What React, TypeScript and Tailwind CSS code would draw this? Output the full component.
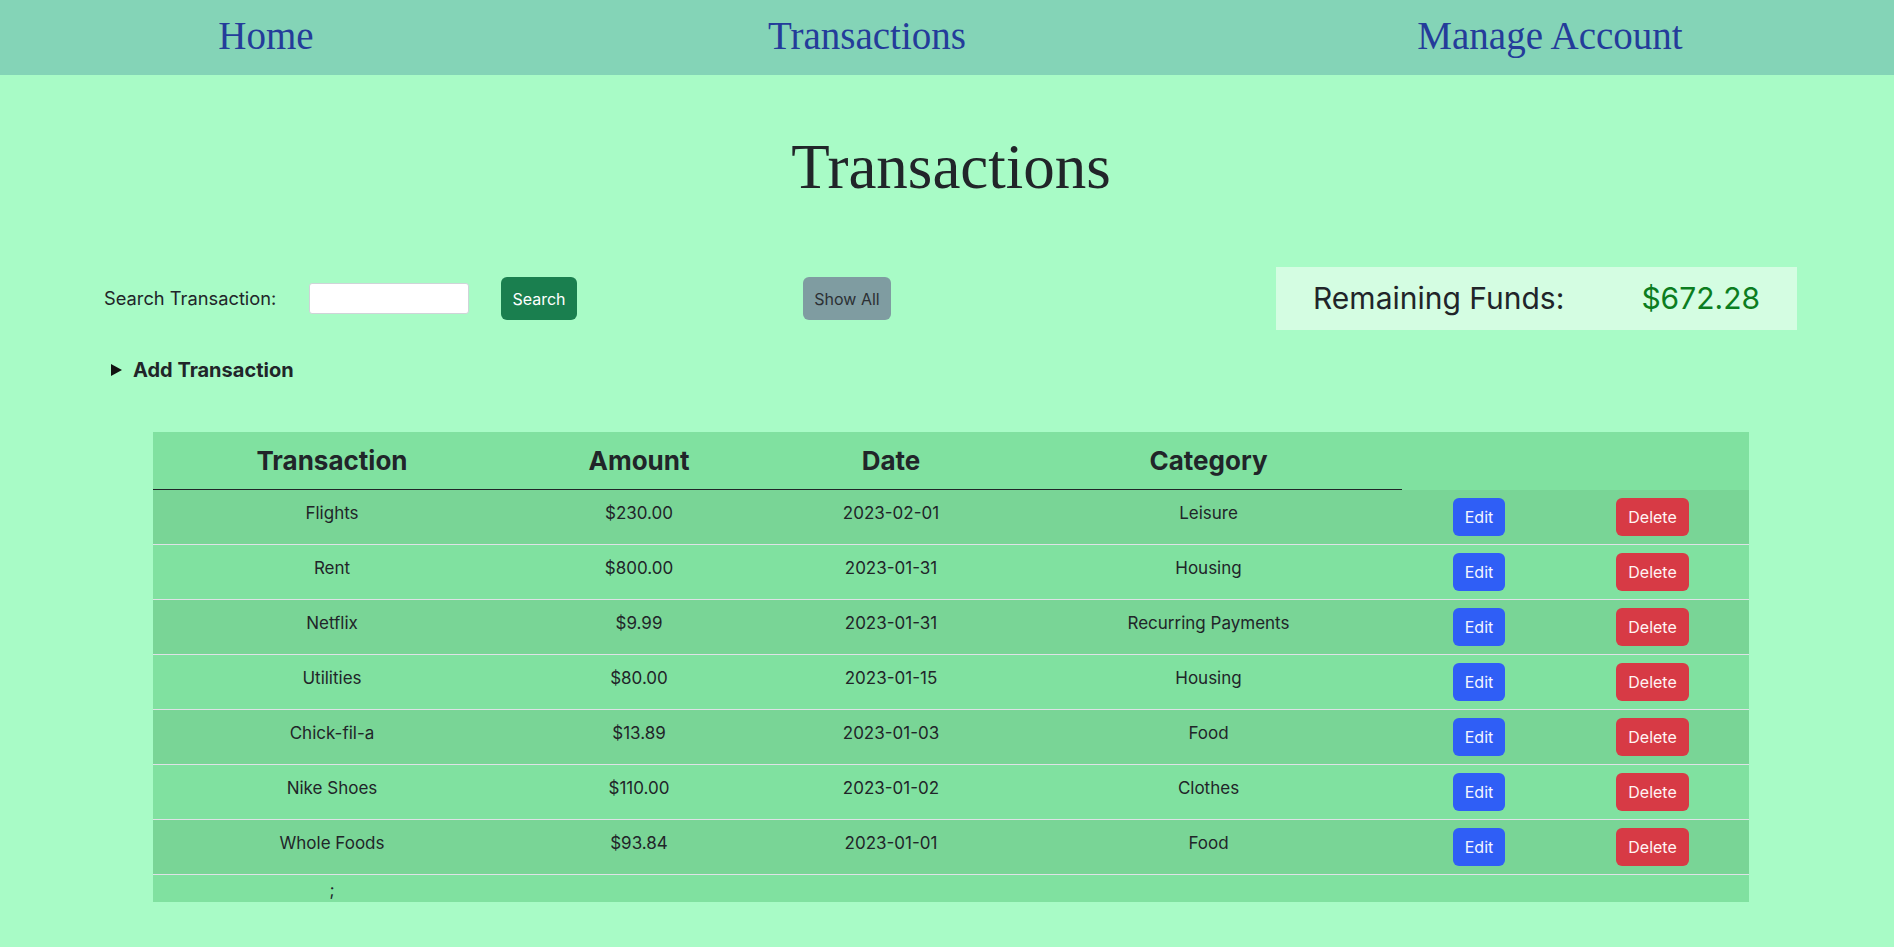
import React from "react";

interface Txn {
  name: string;
  amount: string;
  date: string;
  category: string;
}

const txns: Txn[] = [
  { name: "Flights", amount: "$230.00", date: "2023-02-01", category: "Leisure" },
  { name: "Rent", amount: "$800.00", date: "2023-01-31", category: "Housing" },
  { name: "Netflix", amount: "$9.99", date: "2023-01-31", category: "Recurring Payments" },
  { name: "Utilities", amount: "$80.00", date: "2023-01-15", category: "Housing" },
  { name: "Chick-fil-a", amount: "$13.89", date: "2023-01-03", category: "Food" },
  { name: "Nike Shoes", amount: "$110.00", date: "2023-01-02", category: "Clothes" },
  { name: "Whole Foods", amount: "$93.84", date: "2023-01-01", category: "Food" },
];

const serif = { fontFamily: '"Liberation Serif", "DejaVu Serif", serif' };

const NavBar: React.FC = () => (
  <nav className="h-[75px] bg-[#84d4b7] flex items-center pb-1 pl-[166px]" style={serif}>
    <span className="w-[200px] text-center text-[39px] leading-none text-[#243c9a]">Home</span>
    <span className="ml-[401px] w-[200px] text-center text-[39px] leading-none text-[#243c9a]">Transactions</span>
    <span className="ml-[433px] w-[300px] text-center text-[39px] leading-none text-[#243c9a]">Manage Account</span>
  </nav>
);

const SearchBar: React.FC = () => (
  <div className="mt-[68px] h-[63px] flex items-center pl-[104px]">
    <label className="w-[205px] text-[18.3px] text-[#212529]">Search Transaction:</label>
    <input
      type="text"
      className="w-[160px] h-[31px] bg-white border border-[#cfd4d8] rounded-[3px]"
    />
    <button className="ml-[32px] w-[76px] h-[43px] rounded-md bg-[#1a7f4f] text-white text-[16px]">
      Search
    </button>
    <button className="ml-[226px] w-[88px] h-[43px] rounded-md bg-[#7f9ca1] text-[#2b3034] text-[16px]">
      Show All
    </button>
    <div className="ml-auto mr-[97px] w-[521px] h-[63px] bg-[#d4fde2] flex items-center justify-between px-[37px]">
      <span className="text-[30px] text-[#212529]">Remaining Funds:</span>
      <span className="text-[30px] text-[#0b7d1f]">$672.28</span>
    </div>
  </div>
);

const cell = "pt-[11px] px-2 pb-2 align-top text-center leading-6 border-b border-[#dee2e6]";
const btnCell = "p-2 align-top text-center border-b border-[#dee2e6]";

const App: React.FC = () => {
  return (
    <div className="min-h-screen bg-[#a8fbc6] pb-10" style={{ fontFamily: 'Inter, "Noto Sans", sans-serif' }}>
      <NavBar />
      <h1 className="mt-[61px] pl-2 text-center text-[63px] leading-none text-[#212529]" style={serif}>
        Transactions
      </h1>
      <SearchBar />

      <div className="mt-[28px] pl-[111px] flex items-center gap-[11px] h-6">
        <svg width="11" height="12" viewBox="0 0 11 12">
          <path d="M0 0 L11 6 L0 12 Z" fill="#111" />
        </svg>
        <span className="text-[20px] font-bold text-[#212529]">Add Transaction</span>
      </div>

      <table className="mt-[50px] ml-[153px] w-[1596px] table-fixed border-separate border-spacing-0 bg-[#80e1a0] text-[17px] text-[#212529]">
        <colgroup>
          <col className="w-[358px]" />
          <col className="w-[256px]" />
          <col className="w-[248px]" />
          <col className="w-[387px]" />
          <col className="w-[154px]" />
          <col className="w-[193px]" />
        </colgroup>
        <thead>
          <tr>
            {["Transaction", "Amount", "Date", "Category"].map((h) => (
              <th
                key={h}
                className="h-[58px] border-b border-[#212529] text-[26px] font-bold align-middle"
              >
                {h}
              </th>
            ))}
            <th className="h-[58px]" />
            <th className="h-[58px]" />
          </tr>
        </thead>
        <tbody>
          {txns.map((t, i) => (
            <tr key={t.name} className={i % 2 === 0 ? "bg-[#79d596]" : "bg-[#80e1a0]"}>
              <td className={cell}>{t.name}</td>
              <td className={cell}>{t.amount}</td>
              <td className={cell}>{t.date}</td>
              <td className={cell}>{t.category}</td>
              <td className={btnCell}>
                <button className="h-[38px] px-3 rounded-md bg-[#2f5ef6] text-[#f4f6ff] text-[16px]">Edit</button>
              </td>
              <td className={btnCell}>
                <button className="h-[38px] px-3 rounded-md bg-[#d73a45] text-[#fff4f4] text-[16px]">Delete</button>
              </td>
            </tr>
          ))}
          <tr>
            <td className="h-[27px] pt-[3px] align-top text-center leading-6">;</td>
            <td />
            <td />
            <td />
            <td />
            <td />
          </tr>
        </tbody>
      </table>
    </div>
  );
};

export default App;
